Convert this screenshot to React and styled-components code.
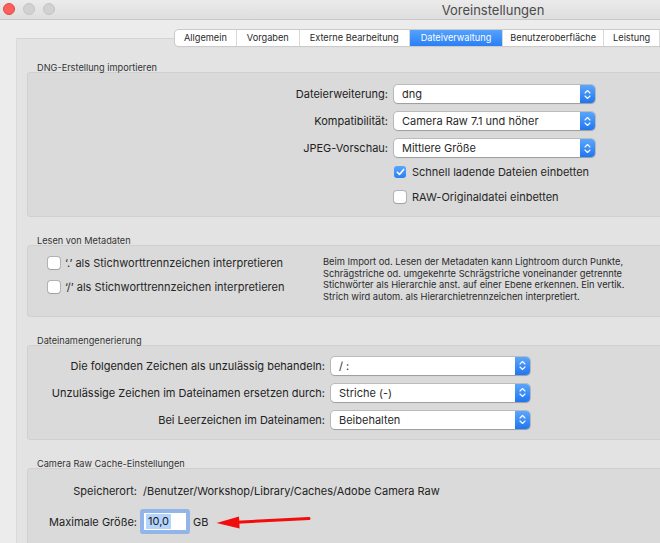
import React from "react";
import styled, { createGlobalStyle } from "styled-components";

const GlobalStyle = createGlobalStyle`
  html, body { margin: 0; padding: 0; background: #ececec; }
  body {
    font-family: Inter, "Noto Sans", "Liberation Sans", sans-serif;
    color: #262626;
    -webkit-font-smoothing: antialiased;
  }
  #root { width: 660px; height: 543px; overflow: hidden; }
`;

const Window = styled.div`
  width: 986px;
  height: 543px;
  display: flex;
  flex-direction: column;
  background: #ececec;
`;

const TitleBar = styled.div`
  height: 19px;
  flex-shrink: 0;
  position: relative;
  display: flex;
  align-items: center;
  justify-content: center;
  background: linear-gradient(#ebebeb, #dedede);
  border-bottom: 1px solid #c8c8c8;
`;

const Lights = styled.div`
  position: absolute;
  left: 3px;
  top: 3px;
  display: flex;
  gap: 8px;
`;

const Light = styled.span`
  width: 12px;
  height: 12px;
  border-radius: 50%;
  box-sizing: border-box;
  background: ${(p) => (p.$red ? "#fc605b" : "#d1d1d1")};
  border: 1px solid ${(p) => (p.$red ? "#de4a43" : "#c4c4c4")};
`;

const Title = styled.div`
  font-size: 13px;
  color: #4a4a4a;
`;

const Body = styled.div`
  flex: 1;
  display: flex;
  flex-direction: column;
  padding: 10px 0 0 16px;
`;

const TabStrip = styled.div`
  position: relative;
  z-index: 1;
  align-self: flex-start;
  display: flex;
  margin: 0 0 -8px 159px;
  height: 16px;
  box-sizing: border-box;
  background: #fff;
  border-radius: 4px;
  box-shadow: 0 0 0 1px #cbcbcb, 0 1px 1px rgba(0, 0, 0, 0.12);
  overflow: hidden;
`;

const Tab = styled.div`
  font-size: 9.2px;
  line-height: 16px;
  padding: 0 ${(p) => p.$pad}px;
  white-space: nowrap;
  color: ${(p) => (p.$active ? "#fff" : "#2a2a2a")};
  background: ${(p) => (p.$active ? "linear-gradient(#55a2fb, #2a7ff5)" : "transparent")};
  & + & { border-left: 1px solid #d9d9d9; }
`;

const TabBox = styled.div`
  flex: 1;
  background: #e3e3e3;
  border-top: 1px solid #d4d4d4;
  border-left: 1px solid #dadada;
  padding: 24px 16px 0 10px;
`;

const Section = styled.section`
  & + & { margin-top: 19px; }
`;

const Legend = styled.div`
  font-size: 9.2px;
  line-height: 10px;
  height: 10px;
  padding-left: 10px;
  margin-bottom: -1px;
  color: #333;
`;

const Group = styled.div`
  background: #dadada;
  border: 1px solid #d0d0d0;
  border-radius: 3px;
  padding: ${(p) => p.$pad};
`;

const Row = styled.div`
  display: flex;
  align-items: center;
  height: ${(p) => p.$h || 18}px;
  margin-top: ${(p) => p.$mt || 0}px;
`;

const Label = styled.div`
  width: ${(p) => p.$w}px;
  margin-right: 6px;
  flex-shrink: 0;
  text-align: right;
  font-size: 11px;
  white-space: nowrap;
  color: #222;
`;

const Popup = styled.div`
  width: ${(p) => p.$w}px;
  height: 18px;
  display: flex;
  background: #fff;
  border-radius: 4px;
  box-shadow: 0 0 0 1px rgba(0, 0, 0, 0.14), 0 1px 1px rgba(0, 0, 0, 0.16);
  overflow: hidden;
`;

const PopupValue = styled.span`
  flex: 1;
  padding-left: 8px;
  font-size: 11px;
  line-height: 18px;
  color: #2a2a2a;
  white-space: nowrap;
`;

const Stepper = styled.span`
  width: 15px;
  display: flex;
  align-items: center;
  justify-content: center;
  background: linear-gradient(#5ba6fc, #1f76f0);
`;

const Box = styled.span`
  width: 12px;
  height: 12px;
  flex-shrink: 0;
  box-sizing: border-box;
  border-radius: 3px;
  display: flex;
  align-items: center;
  justify-content: center;
  background: ${(p) => (p.$on ? "linear-gradient(#5aa5fb, #2a7ff5)" : "#fff")};
  box-shadow: ${(p) =>
    p.$on ? "none" : "0 0 0 1px rgba(0,0,0,0.18), 0 1px 1px rgba(0,0,0,0.1)"};
`;

const CheckText = styled.span`
  margin-left: ${(p) => p.$gap}px;
  font-size: 11px;
  white-space: nowrap;
  color: #262626;
`;

const Split = styled.div`
  display: flex;
`;

const CheckColumn = styled.div`
  width: 275px;
  padding: 8px 0 0 20px;
  flex-shrink: 0;
`;

const Note = styled.p`
  margin: 0;
  padding-top: 10px;
  font-size: 9.3px;
  line-height: 11.7px;
  color: #2a2a2a;
  white-space: nowrap;
`;

const Path = styled.span`
  font-size: 11px;
  color: #222;
  white-space: nowrap;
`;

const SizeField = styled.div`
  width: 44px;
  height: 19px;
  box-sizing: border-box;
  background: #fff;
  border: 1px solid #8fb7ee;
  border-radius: 1px;
  box-shadow: 0 0 0 3px rgba(88, 150, 240, 0.55);
  display: flex;
  align-items: center;
  padding-left: 2px;
`;

const Selected = styled.span`
  font-size: 11px;
  line-height: 15px;
  padding: 0 2px;
  background: #b3d4fd;
  color: #1a1a1a;
`;

const Unit = styled.span`
  margin-left: 6px;
  font-size: 11px;
  color: #222;
`;

const Pointer = styled.svg`
  margin-left: 8px;
  flex-shrink: 0;
`;

function Chevrons() {
  return (
    <svg width="7" height="11" viewBox="0 0 7 11" fill="none">
      <path d="M1 4 L3.5 1.5 L6 4" stroke="#fff" strokeWidth="1.1" strokeLinecap="round" strokeLinejoin="round" />
      <path d="M1 7 L3.5 9.5 L6 7" stroke="#fff" strokeWidth="1.1" strokeLinecap="round" strokeLinejoin="round" />
    </svg>
  );
}

function Select({ width, value }) {
  return (
    <Popup $w={width}>
      <PopupValue>{value}</PopupValue>
      <Stepper>
        <Chevrons />
      </Stepper>
    </Popup>
  );
}

function Check({ on, gap = 6, children }) {
  return (
    <>
      <Box $on={on}>
        {on && (
          <svg width="9" height="8" viewBox="0 0 9 8" fill="none">
            <path d="M1.3 4.2 L3.5 6.4 L7.7 1.4" stroke="#fff" strokeWidth="1.6" strokeLinecap="round" strokeLinejoin="round" />
          </svg>
        )}
      </Box>
      <CheckText $gap={gap}>{children}</CheckText>
    </>
  );
}

const tabs = [
  ["Allgemein", 9],
  ["Vorgaben", 10],
  ["Externe Bearbeitung", 10],
  ["Dateiverwaltung", 11, true],
  ["Benutzeroberfläche", 7],
  ["Leistung", 9],
  ["Lightroom mobile", 12],
  ["Netzwerk", 10],
];

export default function App() {
  return (
    <Window>
      <GlobalStyle />
      <TitleBar>
        <Lights>
          <Light $red />
          <Light />
          <Light />
        </Lights>
        <Title>Voreinstellungen</Title>
      </TitleBar>

      <Body>
        <TabStrip>
          {tabs.map(([name, pad, active]) => (
            <Tab key={name} $pad={pad} $active={active}>
              {name}
            </Tab>
          ))}
        </TabStrip>

        <TabBox>
          <Section>
            <Legend>DNG-Erstellung importieren</Legend>
            <Group $pad="12px 0 10px">
              <Row>
                <Label $w={360}>Dateierweiterung:</Label>
                <Select width={201} value="dng" />
              </Row>
              <Row $mt={9}>
                <Label $w={360}>Kompatibilität:</Label>
                <Select width={201} value="Camera Raw 7.1 und höher" />
              </Row>
              <Row $mt={9}>
                <Label $w={360}>JPEG-Vorschau:</Label>
                <Select width={201} value="Mittlere Größe" />
              </Row>
              <Row $mt={6}>
                <Label $w={360} />
                <Check on>Schnell ladende Dateien einbetten</Check>
              </Row>
              <Row $mt={7}>
                <Label $w={360} />
                <Check>RAW-Originaldatei einbetten</Check>
              </Row>
            </Group>
          </Section>

          <Section>
            <Legend>Lesen von Metadaten</Legend>
            <Group $pad="0 0 13px">
              <Split>
                <CheckColumn>
                  <Row>
                    <Check gap={5}>‘.’ als Stichworttrennzeichen interpretieren</Check>
                  </Row>
                  <Row $mt={6}>
                    <Check gap={5}>‘/’ als Stichworttrennzeichen interpretieren</Check>
                  </Row>
                </CheckColumn>
                <Note>
                  Beim Import od. Lesen der Metadaten kann Lightroom durch Punkte,
                  <br />
                  Schrägstriche od. umgekehrte Schrägstriche voneinander getrennte
                  <br />
                  Stichwörter als Hierarchie anst. auf einer Ebene erkennen. Ein vertik.
                  <br />
                  Strich wird autom. als Hierarchietrennzeichen interpretiert.
                </Note>
              </Split>
            </Group>
          </Section>

          <Section>
            <Legend>Dateinamengenerierung</Legend>
            <Group $pad="11px 0 10px">
              <Row>
                <Label $w={297}>Die folgenden Zeichen als unzulässig behandeln:</Label>
                <Select width={199} value="/ :" />
              </Row>
              <Row $mt={9}>
                <Label $w={297}>Unzulässige Zeichen im Dateinamen ersetzen durch:</Label>
                <Select width={199} value="Striche (-)" />
              </Row>
              <Row $mt={9}>
                <Label $w={297}>Bei Leerzeichen im Dateinamen:</Label>
                <Select width={199} value="Beibehalten" />
              </Row>
            </Group>
          </Section>

          <Section>
            <Legend>Camera Raw Cache-Einstellungen</Legend>
            <Group $pad="13px 0 40px">
              <Row>
                <Label $w={109}>Speicherort:</Label>
                <Path>/Benutzer/Workshop/Library/Caches/Adobe Camera Raw</Path>
              </Row>
              <Row $h={22} $mt={11}>
                <Label $w={109}>Maximale Größe:</Label>
                <SizeField>
                  <Selected>10,0</Selected>
                </SizeField>
                <Unit>GB</Unit>
                <Pointer width="96" height="16" viewBox="0 0 96 16">
                  <path d="M21 8.2 L93 4.6" stroke="#f20d0d" strokeWidth="3" strokeLinecap="round" />
                  <path d="M0.5 9 L23 2.6 L23.6 14.4 Z" fill="#f20d0d" />
                </Pointer>
              </Row>
            </Group>
          </Section>
        </TabBox>
      </Body>
    </Window>
  );
}
